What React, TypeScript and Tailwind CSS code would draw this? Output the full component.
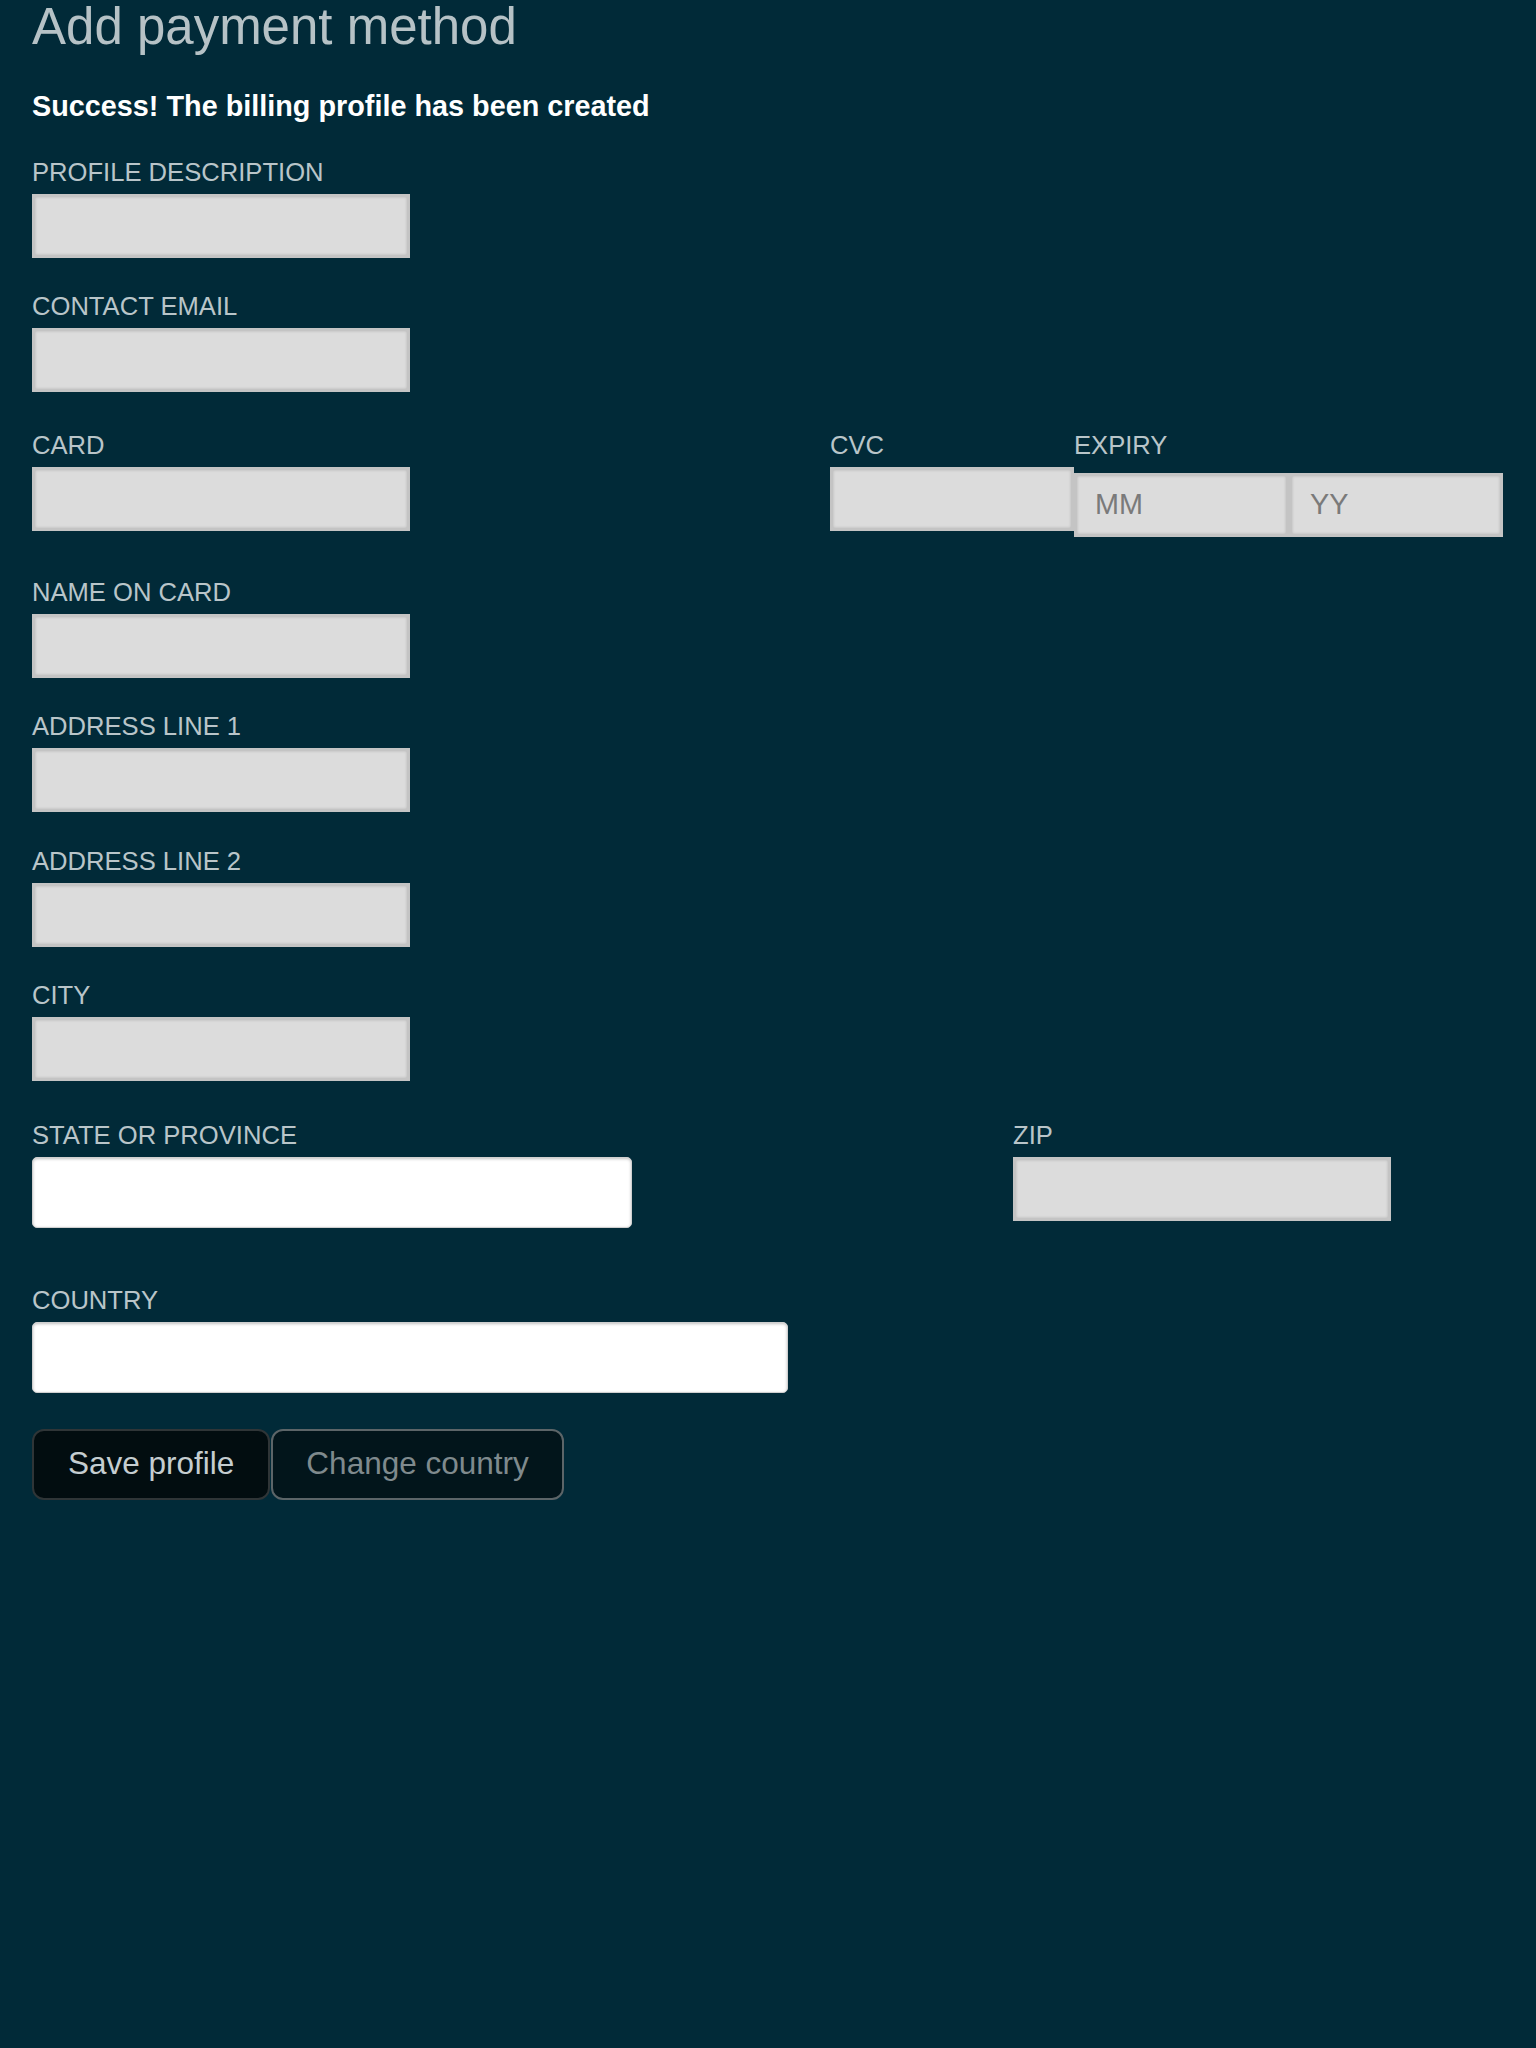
const grayInput =
  'block h-[64px] bg-[#dcdcdc] border-[3px] border-[#c4c4c4] shadow-[inset_0_0_3px_rgba(0,0,0,0.18)] px-[18px] text-[28.8px] text-[#333] placeholder:text-[#7a7a7a] outline-none';
const whiteInput =
  'block h-[71px] bg-white border border-[#cfcfcf] rounded-[5px] shadow-[inset_0_1px_3px_rgba(0,0,0,0.25)] px-[18px] text-[28.8px] text-[#333] outline-none';

function Label({ children }: { children: React.ReactNode }) {
  return (
    <label className="block text-[25.6px] leading-[29px] text-[#b9c5c9] mb-[7px] uppercase whitespace-nowrap">
      {children}
    </label>
  );
}

function Field({ label, className = '' }: { label: string; className?: string }) {
  return (
    <div className={className}>
      <Label>{label}</Label>
      <input type="text" className={`${grayInput} w-[378px]`} />
    </div>
  );
}

export default function App() {
  return (
    <div className="min-h-screen bg-[#012a38] px-[32px] pt-[1px] font-['Liberation_Sans',Arial,sans-serif]">
      <h1 className="text-[51px] leading-none text-[#b6c2c6] font-normal">Add payment method</h1>

      <p className="mt-[37.5px] text-[28.8px] leading-[33px] font-bold text-white">
        Success! The billing profile has been created
      </p>

      <form onSubmit={(e) => e.preventDefault()}>
        <Field label="Profile description" className="mt-[35px]" />
        <Field label="Contact email" className="mt-[34px]" />

        {/* card row */}
        <div className="flex items-start mt-[39px]">
          <div className="w-[798px]">
            <Label>Card</Label>
            <input type="text" className={`${grayInput} w-[378px]`} />
          </div>
          <div className="w-[244px]">
            <Label>CVC</Label>
            <input type="text" className={`${grayInput} w-[244px]`} />
          </div>
          <div>
            <Label>Expiry</Label>
            <div className="flex pt-[6px]">
              <input type="text" placeholder="MM" className={`${grayInput} w-[215px]`} />
              <input type="text" placeholder="YY" className={`${grayInput} w-[214px]`} />
            </div>
          </div>
        </div>

        <Field label="Name on card" className="mt-[41px]" />
        <Field label="Address line 1" className="mt-[34.5px]" />
        <Field label="Address line 2" className="mt-[34.5px]" />
        <Field label="City" className="mt-[34.5px]" />

        {/* state / zip row */}
        <div className="flex items-start mt-[39.5px]">
          <div className="w-[981px]">
            <Label>State or province</Label>
            <input type="text" className={`${whiteInput} w-[600px]`} />
          </div>
          <div>
            <Label>Zip</Label>
            <input type="text" className={`${grayInput} w-[378px]`} />
          </div>
        </div>

        <div className="mt-[58px]">
          <Label>Country</Label>
          <input type="text" className={`${whiteInput} w-[756px]`} />
        </div>

        <div className="flex mt-[36px]">
          <button
            type="submit"
            className="h-[71px] px-[34px] bg-[#020d10] border-2 border-[#2f3537] rounded-[12px] text-[31.5px] text-[#c5cdd0]"
          >
            Save profile
          </button>
          <button
            type="button"
            className="ml-[1px] h-[71px] px-[33px] bg-[#02151b] border-2 border-[#5c6568] rounded-[12px] text-[31.5px] text-[#7f8a8d]"
          >
            Change country
          </button>
        </div>
      </form>
    </div>
  );
}
